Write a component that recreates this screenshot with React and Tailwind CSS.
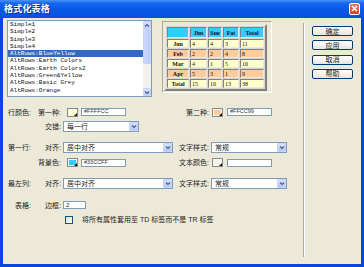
import React from "react";

const items = [
  "Simple1",
  "Simple2",
  "Simple3",
  "Simple4",
  "AltRows:BlueYellow",
  "AltRows:Earth Colors",
  "AltRows:Earth Colors2",
  "AltRows:Green&Yellow",
  "AltRows:Basic Grey",
  "AltRows:Orange",
];

const rows = [
  ["Jun", "4", "4", "3", "11", "bg-[#FFFFCC]"],
  ["Feb", "2", "2", "4", "8", "bg-[#FFCC99]"],
  ["Mar", "4", "1", "5", "10", "bg-[#FFFFCC]"],
  ["Apr", "5", "3", "1", "9", "bg-[#FFCC99]"],
  ["Total", "15", "10", "13", "38", "bg-[#FFFFCC]"],
];

const colW = ["w-[22px]", "w-[17px]", "w-[14px]", "w-[16px]", "w-[24px]"];

function Chevron({ up }) {
  return (
    <svg width="6" height="5" viewBox="0 0 6 5">
      <path
        d={up ? "M1 3.5 L3 1.5 L5 3.5" : "M1 1.5 L3 3.5 L5 1.5"}
        fill="none"
        stroke="#4D6185"
        strokeWidth="1.2"
      />
    </svg>
  );
}

function Select({ w, text }) {
  return (
    <div className={`${w} h-[11px] border border-[#7F9DB9] bg-white flex items-center`}>
      <span className="flex-1 pl-[3px] text-[7px] leading-none text-[#222]">{text}</span>
      <div className="w-[9px] h-[9px] rounded-[1px] bg-gradient-to-b from-[#D5E2FD] to-[#B5C9F5] border border-[#C3D3FD] flex items-center justify-center">
        <Chevron />
      </div>
    </div>
  );
}

function Swatch({ color }) {
  return (
    <div className="relative w-[11px] h-[9px] border border-[#8A8A8A] bg-[#F5F4EE] p-[1px]">
      <div className={`w-full h-full ${color}`} />
      <div className="absolute right-[0px] bottom-[0px] w-0 h-0 border-l-[3px] border-l-transparent border-b-[3px] border-b-[#111]" />
    </div>
  );
}

function Input({ w, text }) {
  return (
    <div className={`${w} h-[8px] border border-[#7F9DB9] bg-white flex items-center pl-[2px] text-[5.5px] leading-none text-[#333] font-['Liberation_Sans',sans-serif]`}>
      {text}
    </div>
  );
}

function Btn({ children }) {
  return (
    <div className="w-[41px] h-[10px] border border-[#003C74] rounded-[2px] bg-gradient-to-b from-white to-[#E6E5DE] flex items-center justify-center text-[7px] leading-none text-[#222]">
      {children}
    </div>
  );
}

function LabelA({ children }) {
  return <div className="w-[24px] text-right text-[7px] leading-none text-[#222] shrink-0">{children}</div>;
}
function LabelB({ children }) {
  return <div className="w-[30px] text-right text-[7px] leading-none text-[#222] shrink-0 mr-[2px]">{children}</div>;
}
function LabelC({ children }) {
  return <div className="w-[34px] text-right text-[7px] leading-none text-[#222] shrink-0 mr-[2px]">{children}</div>;
}

export default function App() {
  return (
    <div className="w-[364px] h-[267px] flex flex-col bg-[#0B45DA] overflow-hidden font-['Liberation_Sans','Noto_Sans_CJK_SC',sans-serif]">
      {/* Title bar */}
      <div className="h-[18px] shrink-0 flex items-center justify-between pl-[4px] pr-[4px] bg-[linear-gradient(to_bottom,#4A94F8_0%,#1466EE_18%,#0758E6_55%,#0A50DA_100%)]">
        <span className="text-white font-bold text-[9px] leading-none tracking-[0.2px] [text-shadow:1px_1px_0_#0A2A8A]">
          格式化表格
        </span>
        <div className="w-[11px] h-[12px] rounded-[2px] border border-white bg-gradient-to-b from-[#E97A5A] to-[#CF4323] flex items-center justify-center mb-[1px]">
          <svg width="7" height="7" viewBox="0 0 7 7">
            <path d="M1 1 L6 6 M6 1 L1 6" stroke="white" strokeWidth="1.5" />
          </svg>
        </div>
      </div>

      {/* Body */}
      <div className="flex-1 mx-[3px] mb-[3px] bg-[#ECE9D8] flex">
        {/* Left part */}
        <div className="w-[300px] shrink-0 pl-[4px] pt-[2px] flex flex-col">
          {/* Top: list + preview */}
          <div className="flex items-start">
            <div className="w-[145px] h-[77px] border border-[#7F9DB9] bg-white flex">
              <div className="flex-1 font-['Liberation_Mono',monospace] text-[6px] leading-[7.3px]">
                {items.map((t, i) => (
                  <div
                    key={t}
                    className={
                      i === 4
                        ? "bg-[#316AC5] text-white pl-[2px] whitespace-pre"
                        : "text-[#111] pl-[2px] whitespace-pre"
                    }
                  >
                    {t}
                  </div>
                ))}
              </div>
              <div className="w-[8px] flex flex-col bg-[#F3F1EC]">
                <div className="h-[8px] bg-gradient-to-b from-[#D5E2FD] to-[#B9CCF6] border border-[#C3D3FD] rounded-[1px] flex items-center justify-center">
                  <Chevron up />
                </div>
                <div className="h-[35px] bg-gradient-to-r from-[#C9D8FC] to-[#BCCDF7] border border-[#C3D3FD] rounded-[1px]" />
                <div className="flex-1" />
                <div className="h-[8px] bg-gradient-to-b from-[#D5E2FD] to-[#B9CCF6] border border-[#C3D3FD] rounded-[1px] flex items-center justify-center">
                  <Chevron />
                </div>
              </div>
            </div>

            {/* Preview */}
            <div className="ml-[10px] mt-[1px] w-[110px] h-[72px] border border-t-[#ACA899] border-l-[#ACA899] border-r-white border-b-white pl-[1px] pt-[2px]">
              <table className="table-fixed w-[103px] border-separate border-spacing-[1px] border-2 border-t-[#E8E8E8] border-l-[#E8E8E8] border-r-[#808080] border-b-[#808080] bg-[#D8D6CC]">
                <tbody>
                  <tr>
                    {["", "Jim", "Sue", "Fat", "Total"].map((h, i) => (
                      <td
                        key={i}
                        className={`${colW[i]} h-[11px] p-0 bg-[#33CCFF] border border-t-[#808080] border-l-[#808080] border-r-[#E8E8E8] border-b-[#E8E8E8] text-center font-bold text-[6px] leading-none font-['Liberation_Serif',serif] text-[#111]`}
                      >
                        {h}
                      </td>
                    ))}
                  </tr>
                  {rows.map((r) => (
                    <tr key={r[0]}>
                      {r.slice(0, 5).map((c, i) => (
                        <td
                          key={i}
                          className={`h-[9px] p-0 ${r[5]} border border-t-[#808080] border-l-[#808080] border-r-[#E8E8E8] border-b-[#E8E8E8] text-[6px] leading-none font-['Liberation_Serif',serif] text-[#111] ${
                            i === 0 ? "text-center font-bold" : "text-left pl-[1px]"
                          }`}
                        >
                          {c}
                        </td>
                      ))}
                    </tr>
                  ))}
                </tbody>
              </table>
            </div>
          </div>

          {/* Row 1 */}
          <div className="flex items-center h-[10px] mt-[10px]">
            <LabelA>行颜色:</LabelA>
            <LabelB>第一种:</LabelB>
            <div className="w-[112px] flex items-center">
              <div className="ml-[4px] mr-[3px]">
                <Swatch color="bg-[#FFFFCC]" />
              </div>
              <Input w="w-[45px]" text="#FFFFCC" />
            </div>
            <LabelC>第二种:</LabelC>
            <div className="ml-[1px] mr-[4px]">
              <Swatch color="bg-[#FFCC99]" />
            </div>
            <Input w="w-[45px]" text="#FFCC99" />
          </div>

          {/* Row 2 */}
          <div className="flex items-center h-[11px] mt-[4px]">
            <LabelA></LabelA>
            <LabelB>交错:</LabelB>
            <Select w="w-[76px]" text="每一行" />
          </div>

          {/* Row 3 */}
          <div className="flex items-center h-[11px] mt-[10px]">
            <LabelA>第一行:</LabelA>
            <LabelB>对齐:</LabelB>
            <div className="w-[112px]">
              <Select w="w-[110px]" text="居中对齐" />
            </div>
            <LabelC>文字样式:</LabelC>
            <Select w="w-[76px]" text="常规" />
          </div>

          {/* Row 4 */}
          <div className="flex items-center h-[11px] mt-[4px]">
            <LabelA></LabelA>
            <LabelB>背景色:</LabelB>
            <div className="w-[112px] flex items-center">
              <div className="ml-[4px] mr-[3px]">
                <Swatch color="bg-[#33CCFF]" />
              </div>
              <Input w="w-[45px]" text="#33CCFF" />
            </div>
            <LabelC>文本颜色:</LabelC>
            <div className="ml-[1px] mr-[4px]">
              <Swatch color="bg-[#F5F4EE]" />
            </div>
            <Input w="w-[45px]" text="" />
          </div>

          {/* Row 5 */}
          <div className="flex items-center h-[11px] mt-[10px]">
            <LabelA>最左列:</LabelA>
            <LabelB>对齐:</LabelB>
            <div className="w-[112px]">
              <Select w="w-[110px]" text="居中对齐" />
            </div>
            <LabelC>文字样式:</LabelC>
            <Select w="w-[76px]" text="常规" />
          </div>

          {/* Row 6 */}
          <div className="flex items-center h-[10px] mt-[11px]">
            <LabelA>表格:</LabelA>
            <LabelB>边框:</LabelB>
            <div className="w-[23px] h-[8px] border border-[#7F9DB9] bg-white flex items-center pl-[2px] text-[6px] leading-none text-[#222]">
              2
            </div>
          </div>

          {/* Row 7 */}
          <div className="flex items-center h-[9px] mt-[5px] pl-[58px]">
            <div className="w-[8px] h-[8px] border border-[#1C5180] bg-gradient-to-br from-[#DCDCD7] to-white" />
            <span className="ml-[9px] text-[7px] leading-none text-[#222]">
              将所有属性套用至 TD 标签而不是 TR 标签
            </span>
          </div>
        </div>

        {/* Separator */}
        <div className="w-[2px] mt-[5px] mb-[7px] flex">
          <div className="w-px bg-[#ACA899]" />
          <div className="w-px bg-white" />
        </div>

        {/* Buttons */}
        <div className="flex-1 pl-[7px] pt-[8px] flex flex-col gap-[4.3px]">
          <Btn>确定</Btn>
          <Btn>应用</Btn>
          <Btn>取消</Btn>
          <Btn>帮助</Btn>
        </div>
      </div>
    </div>
  );
}
